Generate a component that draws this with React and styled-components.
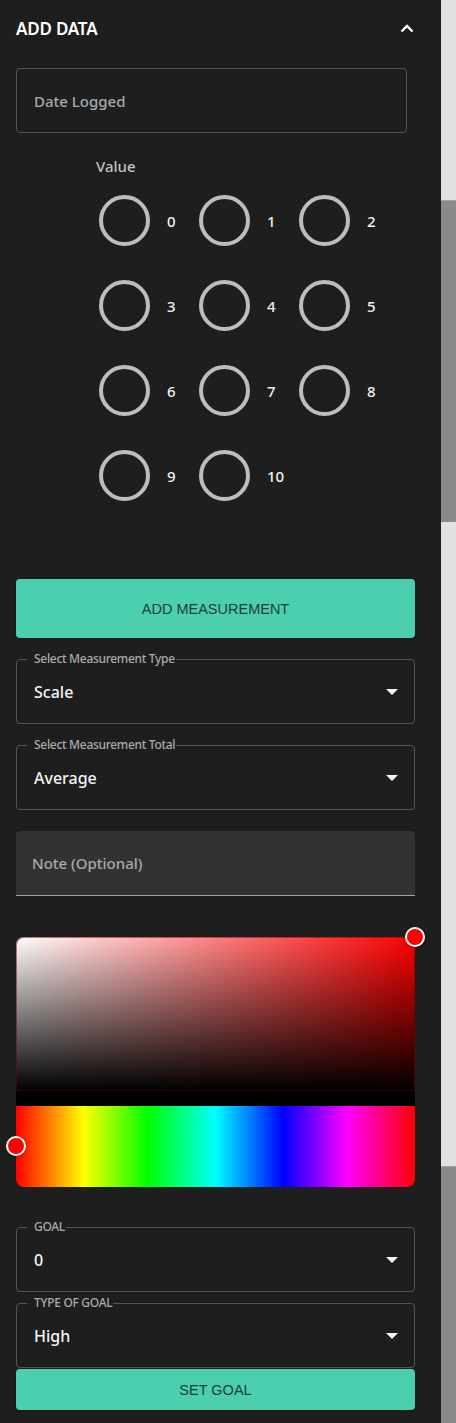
import React from 'react';
import styled, { createGlobalStyle } from 'styled-components';

const GlobalStyle = createGlobalStyle`
    body {
        margin: 0;
        background: #1e1e1e;
        font-family: "Noto Sans", "Open Sans", sans-serif;
    }
`

const Page = styled.div`
    display: flex;
    min-height: 1423px;
`

const Panel = styled.div`
    width: 441px;
    box-sizing: border-box;
    padding: 0 26px 0 16px;
    background: #1e1e1e;
    display: flex;
    flex-direction: column;
`

const Track = styled.div`
    width: 15px;
    display: flex;
    flex-direction: column;
    background: #e1e1e1;
`

const TrackPart = styled.div`
    height: ${props => props.h}px;
    background: ${props => props.thumb ? "#8a8a8a" : "transparent"};
    border-top: ${props => props.thumb ? "1px solid #a3a3a3" : "none"};
    box-sizing: border-box;
    flex-shrink: 0;
`

const Header = styled.div`
    height: 56px;
    display: flex;
    align-items: center;
    justify-content: space-between;
    padding-right: 1px;
    h2 {
        margin: 0;
        font-size: 17px;
        font-weight: 600;
        color: #fff;
        letter-spacing: -0.2px;
    }
`

const DateField = styled.div`
    margin-top: 12px;
    width: 391px;
    height: 65px;
    box-sizing: border-box;
    border: 1px solid #555;
    border-radius: 4px;
    display: flex;
    align-items: center;
    padding-left: 17px;
    font-size: 15px;
    font-weight: 500;
    color: #a9a9a9;
`

const ValueLabel = styled.div`
    margin-top: 23px;
    padding-left: 80px;
    font-size: 15px;
    font-weight: 500;
    line-height: 20px;
    color: #c2c2c2;
`

const RadioGrid = styled.div`
    margin-top: 19px;
    padding-left: 83px;
    display: grid;
    grid-template-columns: repeat(3, 100px);
    row-gap: 34px;
`

const RadioItem = styled.label`
    display: flex;
    align-items: center;
    gap: 17px;
    font-size: 15px;
    font-weight: 500;
    color: #f2f2f2;
`

const Ring = styled.span`
    width: 51px;
    height: 51px;
    box-sizing: border-box;
    border: 4.5px solid #bdbdbd;
    border-radius: 50%;
    flex-shrink: 0;
`

const Button = styled.button`
    margin-top: ${props => props.mt}px;
    width: 100%;
    height: ${props => props.h}px;
    border: none;
    border-radius: 4px;
    background: #4ccfae;
    color: #1f3f37;
    font-family: "Liberation Sans", Arial, sans-serif;
    font-size: 14.5px;
    box-shadow: 0 1px 3px rgba(0, 0, 0, 0.3);
    padding: 0;
`

const SelectBox = styled.div`
    position: relative;
    margin-top: ${props => props.mt}px;
    height: 65px;
    box-sizing: border-box;
    border: 1px solid #555;
    border-radius: 4px;
    display: flex;
    align-items: center;
    justify-content: space-between;
    padding: 0 16px 0 17px;
    font-size: 16px;
    font-weight: 500;
    color: #f4f4f4;
`

const FloatLabel = styled.span`
    position: absolute;
    top: -9px;
    left: 10px;
    padding: 0 1px 0 7px;
    background: #1e1e1e;
    font-size: 12px;
    font-weight: 500;
    line-height: 16px;
    color: #ababab;
    letter-spacing: -0.3px;
`

const NoteField = styled.div`
    margin-top: 21px;
    height: 65px;
    box-sizing: border-box;
    background: #323232;
    border-radius: 4px 4px 0 0;
    border-bottom: 1px solid #a0a0a0;
    display: flex;
    align-items: center;
    padding-left: 16px;
    font-size: 15px;
    font-weight: 500;
    color: #a9a9a9;
`

const Picker = styled.div`
    margin-top: 41px;
    display: flex;
    flex-direction: column;
`

const Saturation = styled.div`
    position: relative;
    height: 169px;
    box-sizing: border-box;
    border-bottom: 15px solid #000;
    border-radius: 8px 8px 0 0;
    background: linear-gradient(to top, #000, rgba(0, 0, 0, 0)),
        linear-gradient(to right, #fff, #f00);
    box-shadow: inset 0 0 0 1px rgba(120, 0, 0, 0.5);
`

const Hue = styled.div`
    position: relative;
    height: 81px;
    border-radius: 0 0 8px 8px;
    background: linear-gradient(to right, #f00 0%, #ff0 17%, #0f0 33%, #0ff 50%, #00f 67%, #f0f 83%, #f00 100%);
`

const Pointer = styled.span`
    position: absolute;
    left: ${props => props.x}px;
    top: ${props => props.y}px;
    width: 20px;
    height: 20px;
    box-sizing: border-box;
    transform: translate(-50%, -50%);
    border: 2.5px solid #fff;
    border-radius: 50%;
    background: #f00;
    box-shadow: 0 1px 3px rgba(0, 0, 0, 0.3);
`

const Arrow = () => (
    <svg width="12" height="6" viewBox="0 0 10 5">
        <path d="M0 0l5 5 5-5z" fill="#f4f4f4" />
    </svg>
)

const Select = ({ label, value, mt }) => (
    <SelectBox mt={mt}>
        <FloatLabel>{label}</FloatLabel>
        <span>{value}</span>
        <Arrow />
    </SelectBox>
)

export default function App() {
    const values = [0, 1, 2, 3, 4, 5, 6, 7, 8, 9, 10];

    return (
        <Page>
            <GlobalStyle />
            <Panel>
                <Header>
                    <h2>ADD DATA</h2>
                    <svg width="14" height="9" viewBox="0 0 14 9">
                        <path d="M1.5 7.5L7 2l5.5 5.5" stroke="#fff" strokeWidth="2.4" fill="none" />
                    </svg>
                </Header>
                <DateField>Date Logged</DateField>
                <ValueLabel>Value</ValueLabel>
                <RadioGrid>
                    {values.map(v => (
                        <RadioItem key={v}>
                            <Ring />
                            <span>{v}</span>
                        </RadioItem>
                    ))}
                </RadioGrid>
                <Button mt={78} h={59}>ADD MEASUREMENT</Button>
                <Select mt={21} label="Select Measurement Type" value="Scale" />
                <Select mt={21} label="Select Measurement Total" value="Average" />
                <NoteField>Note (Optional)</NoteField>
                <Picker>
                    <Saturation>
                        <Pointer x={399} y={0} />
                    </Saturation>
                    <Hue>
                        <Pointer x={0} y={40} />
                    </Hue>
                </Picker>
                <Select mt={40} label="GOAL" value="0" />
                <Select mt={11} label="TYPE OF GOAL" value="High" />
                <Button mt={1} h={41}>SET GOAL</Button>
            </Panel>
            <Track>
                <TrackPart h={200} />
                <TrackPart h={322} thumb />
                <TrackPart h={644} />
                <TrackPart h={257} thumb />
            </Track>
        </Page>
    );
}
